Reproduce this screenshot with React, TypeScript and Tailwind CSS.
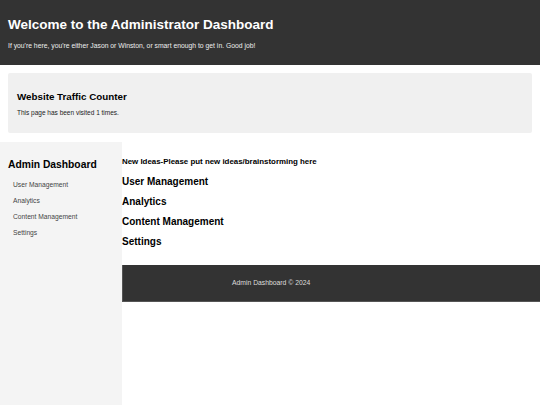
export default function App() {
  const links = ["User Management", "Analytics", "Content Management", "Settings"];
  return (
    <div className="min-h-[405px] w-[540px] bg-white font-['Liberation_Sans',Arial,sans-serif] text-black">
      {/* Header */}
      <header className="h-[65px] bg-[#333333] px-2 pt-[16px] text-white">
        <h1 className="text-[13.5px] font-bold leading-[18px]">Welcome to the Administrator Dashboard</h1>
        <p className="mt-[8px] text-[6.8px] leading-[8px] text-[#eee]">
          If you're here, you're either Jason or Winston, or smart enough to get in. Good job!
        </p>
      </header>

      {/* Traffic counter */}
      <section className="mx-2 mt-2 h-[60px] rounded-[2px] bg-[#f0f0f0] px-[9px] pt-[17px]">
        <h2 className="text-[9.8px] font-bold leading-[13px]">Website Traffic Counter</h2>
        <p className="mt-[6px] text-[6.5px] leading-[8px] text-[#222]">This page has been visited 1 times.</p>
      </section>

      <div className="mt-[9px] flex">
        {/* Sidebar */}
        <aside className="min-h-[263px] w-[122px] shrink-0 bg-[#f4f4f4] px-2 pt-[16px]">
          <h2 className="text-[10.3px] font-bold leading-[14px]">Admin Dashboard</h2>
          <ul className="mt-[5px] pl-[5px]">
            {links.map((l) => (
              <li key={l} className="h-[16px] text-[6.7px] leading-[16px] text-[#444]">
                {l}
              </li>
            ))}
          </ul>
        </aside>

        {/* Main */}
        <main className="flex-1">
          <div className="pt-[15px]">
            <p className="text-[7.9px] font-bold leading-[9px]">New Ideas-Please put new ideas/brainstorming here</p>
            <div className="mt-[6px] flex flex-col">
              {links.map((l) => (
                <h3 key={l} className="h-[20px] text-[10px] font-bold leading-[20px]">
                  {l}
                </h3>
              ))}
            </div>
          </div>
          <footer className="mt-[13px] h-[37px] border-b border-l border-[#555] bg-[#333333] pl-[109px] text-[6.8px] leading-[36px] text-[#ddd]">
            Admin Dashboard © 2024
          </footer>
        </main>
      </div>
    </div>
  );
}
